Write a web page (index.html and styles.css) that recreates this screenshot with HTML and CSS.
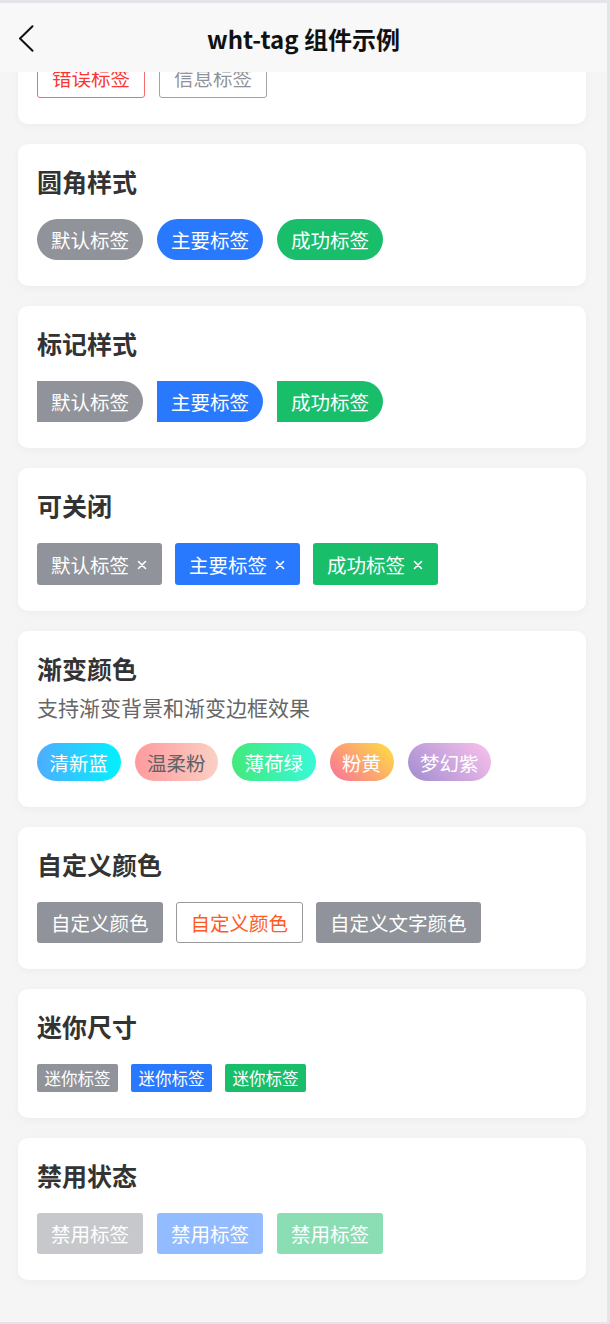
FILE: index.html
```html
<!DOCTYPE html>
<html lang="zh-CN">
<head>
    <meta charset="UTF-8">
    <meta name="viewport" content="width=device-width, initial-scale=1.0">
    <title>wht-tag 组件示例</title>
    <link rel="stylesheet" href="styles.css">
</head>
<body>
    <header class="navbar">
        <span class="nav-back">
            <svg width="16" height="27" viewBox="0 0 16 27">
                <path d="M14.5 1.2 L2 13.5 L14.5 25.8" fill="none" stroke="#111" stroke-width="2" stroke-linecap="round" stroke-linejoin="round"/>
            </svg>
        </span>
        <h1 class="nav-title">wht-tag 组件示例</h1>
        <span></span>
    </header>

    <main class="content">
        <section class="card">
            <h2 class="card-title">镂空样式</h2>
            <div class="tag-row">
                <span class="tag plain plain-error">错误标签</span>
                <span class="tag plain plain-info">信息标签</span>
            </div>
        </section>

        <section class="card">
            <h2 class="card-title">圆角样式</h2>
            <div class="tag-row">
                <span class="tag round info">默认标签</span>
                <span class="tag round primary">主要标签</span>
                <span class="tag round success">成功标签</span>
            </div>
        </section>

        <section class="card">
            <h2 class="card-title">标记样式</h2>
            <div class="tag-row">
                <span class="tag mark info">默认标签</span>
                <span class="tag mark primary">主要标签</span>
                <span class="tag mark success">成功标签</span>
            </div>
        </section>

        <section class="card">
            <h2 class="card-title">可关闭</h2>
            <div class="tag-row tight">
                <span class="tag closable info">默认标签<svg class="tag-close" width="10" height="10" viewBox="0 0 10 10"><path d="M1.5 1.5 L8.5 8.5 M8.5 1.5 L1.5 8.5" stroke="#fff" stroke-width="1.6" stroke-linecap="round"/></svg></span>
                <span class="tag closable primary">主要标签<svg class="tag-close" width="10" height="10" viewBox="0 0 10 10"><path d="M1.5 1.5 L8.5 8.5 M8.5 1.5 L1.5 8.5" stroke="#fff" stroke-width="1.6" stroke-linecap="round"/></svg></span>
                <span class="tag closable success">成功标签<svg class="tag-close" width="10" height="10" viewBox="0 0 10 10"><path d="M1.5 1.5 L8.5 8.5 M8.5 1.5 L1.5 8.5" stroke="#fff" stroke-width="1.6" stroke-linecap="round"/></svg></span>
            </div>
        </section>

        <section class="card">
            <h2 class="card-title with-desc">渐变颜色</h2>
            <p class="card-desc">支持渐变背景和渐变边框效果</p>
            <div class="tag-row">
                <span class="tag grad grad-blue">清新蓝</span>
                <span class="tag grad grad-pink">温柔粉</span>
                <span class="tag grad grad-mint">薄荷绿</span>
                <span class="tag grad grad-sunset">粉黄</span>
                <span class="tag grad grad-purple">梦幻紫</span>
            </div>
        </section>

        <section class="card">
            <h2 class="card-title">自定义颜色</h2>
            <div class="tag-row tight">
                <span class="tag square info">自定义颜色</span>
                <span class="tag square custom-outline">自定义颜色</span>
                <span class="tag square info">自定义文字颜色</span>
            </div>
        </section>

        <section class="card">
            <h2 class="card-title">迷你尺寸</h2>
            <div class="tag-row tight">
                <span class="tag mini info">迷你标签</span>
                <span class="tag mini primary">迷你标签</span>
                <span class="tag mini success">迷你标签</span>
            </div>
        </section>

        <section class="card">
            <h2 class="card-title">禁用状态</h2>
            <div class="tag-row">
                <span class="tag square info disabled">禁用标签</span>
                <span class="tag square primary disabled">禁用标签</span>
                <span class="tag square success disabled">禁用标签</span>
            </div>
        </section>
    </main>
</body>
</html>
```

FILE: styles.css
```css
html {
    height: 100%;
}

body {
    height: 100%;
    box-sizing: border-box;
    margin: 0;
    overflow: hidden;
    font-family: "Noto Sans CJK SC", "Noto Sans", sans-serif;
    background-color: #f5f5f5;
    color: #333;
    border-right: 3px solid #e3e5e8;
    border-bottom: 2px solid #e3e5e8;
}

/* top bar sits over the scrolled content */
.navbar {
    position: fixed;
    top: 0;
    left: 0;
    right: 3px;
    z-index: 10;
    height: 69px;
    border-top: 3px solid #e3e5e8;
    background-color: #f8f8f8;
    display: grid;
    grid-template-columns: 1fr auto 1fr;
    align-items: center;
}

.nav-back {
    display: flex;
    align-items: center;
    padding-left: 18px;
    padding-top: 1px;
}

.nav-title {
    margin: 0;
    font-size: 24px;
    font-weight: bold;
    color: #111;
    padding-top: 2px;
}

.content {
    margin-top: -18px;
    padding: 0 21px 0 18px;
    display: flex;
    flex-direction: column;
    gap: 20px;
}

.card {
    background-color: #fff;
    border-radius: 10px;
    padding: 20px 19px 26px;
    box-shadow: 0 2px 8px rgba(0, 0, 0, 0.04);
}

.card-title {
    margin: 0 0 20px;
    font-size: 25px;
    line-height: 35px;
    font-weight: bold;
    color: #333;
}

.card-title.with-desc {
    margin-bottom: 7px;
}

.card-desc {
    margin: 0 0 21px;
    font-size: 21px;
    line-height: 29px;
    color: #666;
}

.tag-row {
    display: flex;
    gap: 14px;
}

.tag-row.tight {
    gap: 13px;
}

.tag {
    display: inline-flex;
    align-items: center;
    box-sizing: border-box;
    height: 41px;
    padding: 0 14px;
    font-size: 19.5px;
    color: #fff;
    white-space: nowrap;
}

.info {
    background-color: #909399;
}

.primary {
    background-color: #2979ff;
}

.success {
    background-color: #19be6b;
}

.plain {
    background-color: #fff;
    border: 1.5px solid;
    border-radius: 3px;
}

.plain-error {
    color: #fa3534;
    border-color: #f56c6c;
}

.plain-info {
    color: #909399;
    border-color: #a0a3a8;
}

.round {
    border-radius: 21px;
}

.mark {
    border-radius: 0 21px 21px 0;
}

.square {
    border-radius: 3px;
}

.closable {
    height: 42px;
    border-radius: 3px;
    padding-right: 15px;
}

.tag-close {
    margin-left: 8px;
    margin-top: 2px;
}

.grad {
    height: 38px;
    padding: 0 12.5px;
    border-radius: 19px;
}

.grad-blue {
    background: linear-gradient(to right, #4facfe, #00f2fe);
}

.grad-pink {
    background: linear-gradient(to right, #ff9a9e, #fad0c4);
    color: #606266;
}

.grad-mint {
    background: linear-gradient(to right, #43e97b, #38f9d7);
}

.grad-sunset {
    background: linear-gradient(45deg, #fa709a, #fee140);
}

.grad-purple {
    background: linear-gradient(45deg, #a18cd1, #fbc2eb);
}

.custom-outline {
    background-color: #fff;
    border: 1.5px solid #999;
    color: #ff5a1f;
}

.mini {
    height: 28px;
    padding: 0 7.5px;
    font-size: 16.5px;
    border-radius: 2px;
}

.disabled {
    opacity: 0.5;
}
```
